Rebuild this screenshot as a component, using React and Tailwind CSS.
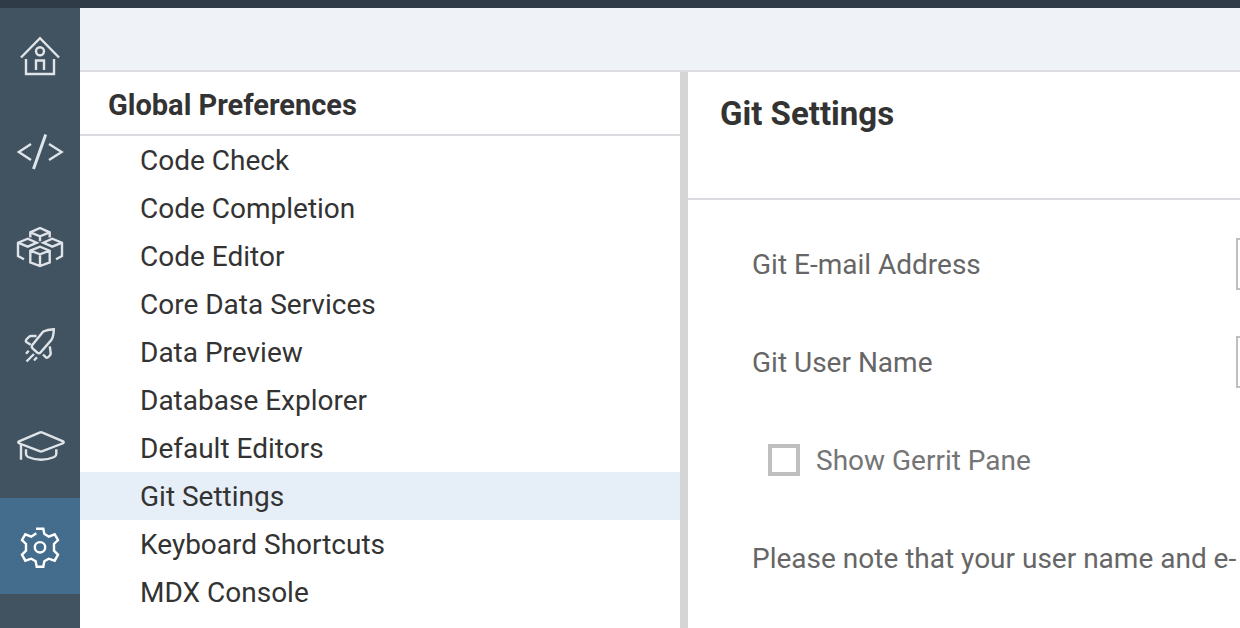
import { useState } from 'react';

const tools = [
  {
    name: 'Home',
    viewBox: '0 8 80 96',
    drawing: (
      <>
        <path d="M21 57.5 40 38.2 59 57.5" />
        <path d="M26 59v15h28V59" />
        <circle cx="40" cy="51.3" r="4" />
        <path d="M36 70v-9.5h8V70" />
      </>
    ),
  },
  {
    name: 'Development',
    viewBox: '0 106 80 96',
    drawing: (
      <>
        <path d="M31 144 18.8 152 31 160M49 144l12.6 8L49 160" />
        <path d="M45.7 134.5 33.5 169" strokeWidth="3" />
      </>
    ),
  },
  {
    name: 'Modules',
    viewBox: '0 204 80 96',
    drawing: (
      <>
        <path d="M30.3 237.5v-5.2L40 228l9.7 4.3v5.2M30.3 232.3l9.7 4 9.7-4M40 236.3v5" />
        <path d="M24 259.3 18 256v-13.3l9.7-4 9 4-9 4-9.7-4" />
        <path d="M56 259.3l6-3.3v-13.3l-9.7-4-9 4 9 4 9.7-4" />
        <path d="M30.3 250.7 40 246.7l9.7 4v11.6L40 266l-9.7-3.7zM30.3 250.7 40 254.3l9.7-3.6M40 254.3V266" />
      </>
    ),
  },
  {
    name: 'Deployment',
    viewBox: '0 302 80 96',
    drawing: (
      <>
        <path d="M53.8 329.2c-4 .2-7.5.8-10.5 2.3L32.3 345q-1.3 2 .5 3.6l4.6 4.1q1.8 1.3 3.3-.5l11-12.7c1.6-3 2-6.5 2.1-10.3z" />
        <path d="M36.5 336H31q-1.5 0-2.5 1.2l-2.3 2.6q-1 1.5.5 2.5l4 2.4" />
        <path d="M49.8 346.3l.9 6.7q.1 1.5-.9 2.5l-1.600 1.700q-1.200 1-2.500 0L43 354.500" />
        <path d="M28.700 350.700 26 353.700M34 354l-7.500 7.500M37 357.300l-3 3.200" />
      </>
    ),
  },
  {
    name: 'Learning',
    viewBox: '0 400 80 96',
    drawing: (
      <>
        <path d="M19 441.300 39.500 432.600q1.500-.6 3 0L63 441.300q1.500 1 0 2L42.500 451.200q-1.500.6-3 0L19 443.300q-1.500-1 0-2z" />
        <path d="M21 444v15.700M26 449.300v4.700q0 2 2 3Q41 462.500 54.300 457q2-1 2-3v-4.700" />
      </>
    ),
  },
  {
    name: 'Preferences',
    viewBox: '0 498 80 96',
    drawing: (
      <>
        <path d="M36 528.700h7.300l1 5 4.400 3 6-2.400 3.300 5.700-4 4v6.700l4 4-3.300 6-6-2-4.400 2.600-1 5.400h-6.600l-1-5.400-4.400-2.600-6 2-3.300-6 4-4V544l-4-4 3.300-5.700 6 2.400 5-3.400" />
        <circle cx="40" cy="547.3" r="5.2" />
      </>
    ),
  },
];

const preferences = [
  'Code Check',
  'Code Completion',
  'Code Editor',
  'Core Data Services',
  'Data Preview',
  'Database Explorer',
  'Default Editors',
  'Git Settings',
  'Keyboard Shortcuts',
  'MDX Console',
];

function Sidebar() {
  const [active, setActive] = useState('Preferences');
  return (
    <nav className="flex w-20 shrink-0 flex-col gap-0.5 bg-[#415260]">
      {tools.map((tool) => (
        <button
          key={tool.name}
          type="button"
          aria-label={tool.name}
          onClick={() => setActive(tool.name)}
          className={
            active === tool.name
              ? 'h-24 w-20 bg-[#446c8c] text-white'
              : 'h-24 w-20 text-[#dfe4e9]'
          }
        >
          <svg
            viewBox={tool.viewBox}
            className="h-24 w-20"
            fill="none"
            stroke="currentColor"
            strokeWidth="2.4"
          >
            {tool.drawing}
          </svg>
        </button>
      ))}
    </nav>
  );
}

function PreferenceList() {
  const [selected, setSelected] = useState('Git Settings');
  return (
    <section className="w-[608px] shrink-0 border-r-8 border-[#d5d5d5]">
      <h2 className="flex h-16 items-center border-b-2 border-[#dcdce0] pt-1 pl-7 text-[29px] font-bold">
        Global Preferences
      </h2>
      <ul>
        {preferences.map((item) => (
          <li key={item}>
            <button
              type="button"
              onClick={() => setSelected(item)}
              className={
                item === selected
                  ? 'block h-12 w-full bg-[#e6eef7] pt-0.5 pl-15 text-left'
                  : 'block h-12 w-full pt-0.5 pl-15 text-left'
              }
            >
              {item}
            </button>
          </li>
        ))}
      </ul>
    </section>
  );
}

function TextField({ id, label }) {
  return (
    <div className="flex items-center">
      <label htmlFor={id} className="w-[484px] shrink-0 pt-0.5">
        {label}
      </label>
      <input
        id={id}
        type="text"
        className="h-13 min-w-80 grow border-2 border-[#bfbfbf] bg-white px-4"
      />
    </div>
  );
}

function GitSettings() {
  return (
    <section className="min-w-0 grow overflow-hidden">
      <header className="h-32 border-b-2 border-[#dcdce0] px-8 pt-[22px]">
        <h1 className="text-[33px] leading-10 font-bold">Git Settings</h1>
      </header>
      <form className="flex flex-col gap-[46px] pt-[38px] pl-16 text-[#666666]">
        <TextField id="git-email" label="Git E-mail Address" />
        <TextField id="git-user" label="Git User Name" />
        <label className="flex h-13 items-center gap-4 pl-4 text-[#757575]">
          <input
            type="checkbox"
            className="size-8 appearance-none border-4 border-[#bfbfbf] bg-white checked:bg-[#446c8c]"
          />
          <span className="pt-0.5">Show Gerrit Pane</span>
        </label>
        <p className="flex h-13 items-center pt-0.5 whitespace-nowrap">
          Please note that your user name and e-
        </p>
      </form>
    </section>
  );
}

export default function App() {
  return (
    <div className="flex h-screen flex-col overflow-hidden bg-white font-['Roboto','Liberation_Sans',sans-serif] text-[28px] leading-9 text-[#333333]">
      <div className="h-2 shrink-0 bg-[#2f3c48]" />
      <div className="flex min-h-0 grow">
        <Sidebar />
        <div className="flex min-w-0 grow flex-col">
          <div className="h-16 shrink-0 border-b-2 border-[#dcdce0] bg-[#eff3f8]" />
          <main className="flex min-h-0 grow">
            <PreferenceList />
            <GitSettings />
          </main>
        </div>
      </div>
    </div>
  );
}
